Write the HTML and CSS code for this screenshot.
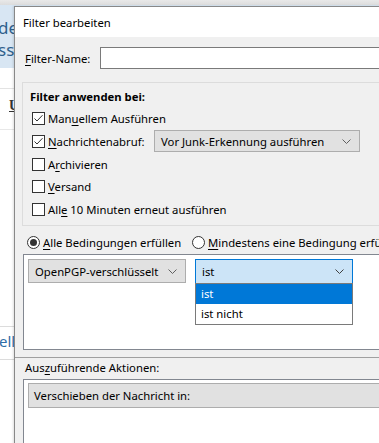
FILE: index.html
```html
<!DOCTYPE html>
<html lang="de">
<head>
<meta charset="utf-8">
<title>Filter bearbeiten</title>
<link rel="stylesheet" href="styles.css">
</head>
<body>
<div class="app">
  <div class="app-top"></div>
  <div class="app-header">
    <div class="app-head-line">de</div>
    <div class="app-head-line">ss</div>
  </div>
  <div class="app-sep"></div>
  <div class="app-u"><span>U</span></div>
  <div class="app-sep2"></div>
  <div class="app-gap"></div>
  <div class="app-sep3"></div>
  <div class="app-link">ell</div>
  <div class="app-sep4"></div>
</div>

<div class="dialog">
  <div class="titlebar">Filter bearbeiten</div>
  <div class="dlg-body">
    <div class="name-row">
      <label class="name-label"><u>F</u>ilter-Name:</label>
      <div class="textbox"></div>
    </div>

    <div class="groupbox">
      <div class="group-title">Filter anwenden bei:</div>
      <div class="check-row r1">
        <span class="cb checked"><svg width="13" height="13" viewBox="0 0 13 13"><polyline points="2.5,6.5 5,9 10.5,3.2" fill="none" stroke="#333" stroke-width="1"/></svg></span>
        <span class="cb-label">Man<u>u</u>ellem Ausführen</span>
      </div>
      <div class="check-row r2">
        <span class="cb checked"><svg width="13" height="13" viewBox="0 0 13 13"><polyline points="2.5,6.5 5,9 10.5,3.2" fill="none" stroke="#333" stroke-width="1"/></svg></span>
        <span class="cb-label nachr"><u>N</u>achrichtenabruf:</span>
        <div class="select junk">
          <span>Vor Junk-Erkennung ausführen</span>
          <svg class="chev" width="9" height="5" viewBox="0 0 9 5"><polyline points="0.5,0.5 4.5,4.5 8.5,0.5" fill="none" stroke="#606060" stroke-width="1"/></svg>
        </div>
      </div>
      <div class="check-row r3">
        <span class="cb"></span>
        <span class="cb-label">A<u>r</u>chivieren</span>
      </div>
      <div class="check-row r4">
        <span class="cb"></span>
        <span class="cb-label"><u>V</u>ersand</span>
      </div>
      <div class="check-row r5">
        <span class="cb"></span>
        <span class="cb-label">All<u>e</u> 10 Minuten erneut ausführen</span>
      </div>
    </div>

    <div class="radio-row">
      <span class="radio on"><span class="dot"></span></span>
      <span class="radio-label first"><u>A</u>lle Bedingungen erfüllen</span>
      <span class="radio"></span>
      <span class="radio-label"><u>M</u>indestens eine Bedingung erfüllen</span>
    </div>

    <div class="cond-box">
      <div class="cond-row">
        <div class="select pgp">
          <span>OpenPGP-verschlüsselt</span>
          <svg class="chev" width="9" height="5" viewBox="0 0 9 5"><polyline points="0.5,0.5 4.5,4.5 8.5,0.5" fill="none" stroke="#606060" stroke-width="1"/></svg>
        </div>
        <div class="op-wrap">
          <div class="select op">
            <span>ist</span>
            <svg class="chev" width="9" height="5" viewBox="0 0 9 5"><polyline points="0.5,0.5 4.5,4.5 8.5,0.5" fill="none" stroke="#404040" stroke-width="1"/></svg>
          </div>
          <ul class="dropdown">
            <li class="sel">ist</li>
            <li>ist nicht</li>
          </ul>
        </div>
      </div>
    </div>

    <div class="actions">
      <div class="actions-label">Aus<u>z</u>uführende Aktionen:</div>
      <div class="action-box">
        <div class="action-item">Verschieben der Nachricht in:</div>
      </div>
    </div>
  </div>
</div>
</body>
</html>
```

FILE: styles.css
```css
html, body {
  margin: 0;
  padding: 0;
  width: 379px;
  height: 443px;
  overflow: hidden;
  background: #ffffff;
  font-family: "Noto Sans", "Segoe UI", sans-serif;
  font-size: 11.3px;
  color: #000;
}

/* ---------- background application ---------- */
.app {
  width: 379px;
}
.app-top {
  height: 5px;
  background: linear-gradient(#e9e9e9, #dcdcdc);
}
.app-header {
  height: 63px;
  background: #d8e6f3;
  padding-top: 12px;
  box-sizing: border-box;
}
.app-head-line {
  font-size: 17px;
  line-height: 22px;
  color: #2f5f8c;
  margin-left: -2px;
}
.app-sep {
  height: 20px;
  border-bottom: 1px solid #e3e3e3;
}
.app-u {
  height: 40px;
  padding-top: 9px;
  box-sizing: border-box;
  padding-left: 9px;
}
.app-u span {
  font-family: "Liberation Serif", serif;
  font-weight: bold;
  font-size: 14px;
  color: #333;
  text-decoration: underline;
}
.app-sep2 {
  height: 0;
  border-bottom: 1px solid #e8e8e8;
}
.app-gap {
  height: 196px;
}
.app-sep3 {
  border-bottom: 1px solid #dcdcdc;
}
.app-link {
  height: 32px;
  line-height: 28px;
  font-size: 15px;
  color: #2f6da6;
  margin-left: -1px;
}
.app-sep4 {
  border-bottom: 1px solid #dcdcdc;
}

/* ---------- dialog window ---------- */
.dialog {
  position: absolute;
  left: 14px;
  top: 6px;
  width: 420px;
  height: 460px;
  border-left: 1px solid #888;
  border-top: 1px solid #888;
  background: #f0f0f0;
  box-shadow: -1px 0 2px rgba(0,0,0,0.12);
  white-space: nowrap;
}
.titlebar {
  height: 30px;
  background: #fff;
  line-height: 31px;
  padding-left: 8px;
}
.dlg-body {
  padding-top: 10px;
}

.name-row {
  display: flex;
  align-items: center;
  height: 22px;
}
.name-label {
  width: 85px;
  flex: none;
  padding-left: 10px;
  box-sizing: border-box;
}
.name-label u, .cb-label u, .radio-label u, .actions-label u {
  text-decoration: underline;
  text-underline-offset: 2px;
}
.textbox {
  flex: 1;
  height: 22px;
  box-sizing: border-box;
  border: 1px solid #7a7a7a;
  background: #fff;
}

.groupbox {
  margin: 13px 0 0 7px;
  border: 1px solid #dcdcdc;
  padding: 6px 0 5px 0;
}
.group-title {
  font-weight: bold;
  line-height: 16px;
  padding-left: 7px;
  margin-bottom: 2px;
}
.check-row {
  display: flex;
  align-items: center;
  height: 22px;
  padding-left: 9px;
}
.check-row.r2 { height: 24px; }
.check-row.r4 { height: 23px; }
.cb {
  width: 13px;
  height: 13px;
  box-sizing: border-box;
  border: 1px solid #333;
  background: #fff;
  flex: none;
  position: relative;
}
.cb svg {
  position: absolute;
  left: -1px;
  top: -1px;
}
.cb-label {
  margin-left: 3px;
}
.cb-label.nachr {
  width: 106px;
  flex: none;
}

.select {
  box-sizing: border-box;
  border: 1px solid #adadad;
  background: #e1e1e1;
  display: flex;
  align-items: center;
  justify-content: space-between;
  padding: 0 8px 0 6px;
  flex: none;
}
.select.junk {
  width: 206px;
  height: 22px;
}
.chev { flex: none; }

.radio-row {
  display: flex;
  align-items: center;
  height: 24px;
  margin-top: 4px;
  padding-left: 12px;
}
.radio {
  width: 13px;
  height: 13px;
  box-sizing: border-box;
  border: 1px solid #333;
  border-radius: 50%;
  background: #fff;
  flex: none;
  display: flex;
  align-items: center;
  justify-content: center;
}
.radio .dot {
  width: 7px;
  height: 7px;
  border-radius: 50%;
  background: #333;
}
.radio-label { margin-left: 3px; }
.radio-label.first {
  width: 149px;
  flex: none;
}

.cond-box {
  margin-left: 8px;
  height: 96px;
  box-sizing: border-box;
  border: 1px solid #828790;
  border-right: none;
  background: #fff;
  padding: 4px 0 0 4px;
}
.cond-row {
  display: flex;
  gap: 9px;
  align-items: flex-start;
}
.select.pgp {
  width: 158px;
  height: 24px;
}
.op-wrap {
  position: relative;
  width: 158px;
}
.select.op {
  width: 158px;
  height: 25px;
  background: #cce4f7;
  border-color: #0078d7;
}
.dropdown {
  position: absolute;
  left: 0;
  top: 24px;
  width: 158px;
  margin: 0;
  padding: 0;
  list-style: none;
  box-sizing: border-box;
  border: 1px solid #7a7a7a;
  background: #fff;
  z-index: 2;
}
.dropdown li {
  height: 20px;
  line-height: 20px;
  padding-left: 5px;
}
.dropdown li.sel {
  background: #0078d7;
  color: #fff;
}

.actions {
  margin-top: 7px;
  border-top: 1px solid #a0a0a0;
}
.actions-label {
  height: 21px;
  line-height: 20px;
  padding-left: 10px;
}
.action-box {
  margin-left: 8px;
  height: 120px;
  border: 1px solid #828790;
  border-right: none;
  background: #fff;
  padding: 3px 0 0 4px;
}
.action-item {
  height: 25px;
  box-sizing: border-box;
  border: 1px solid #adadad;
  border-right: none;
  background: #e1e1e1;
  line-height: 23px;
  padding-left: 5px;
}
```
